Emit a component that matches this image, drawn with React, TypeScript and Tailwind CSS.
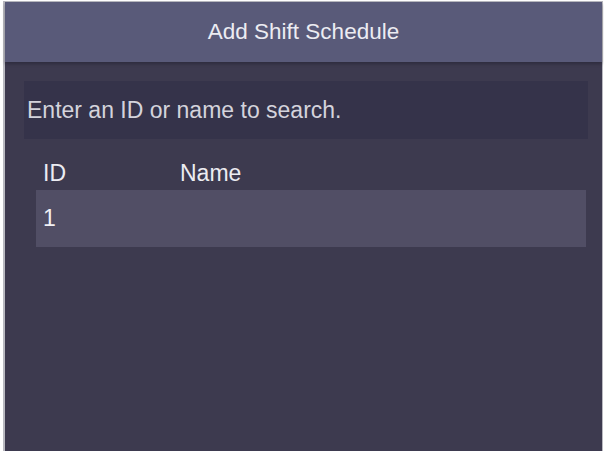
export default function App() {
  const font = { fontFamily: '"Liberation Sans", Arial, sans-serif' }

  return (
    <div className="h-[451px] w-[604px] bg-white pl-[3px] pt-[1px]" style={font}>
      <div className="flex h-[450px] w-[600px] flex-col border-l-2 border-t border-r border-[#b9b9c0] bg-[#3d3a4f]">
        {/* Title bar */}
        <header className="flex h-[60px] shrink-0 items-center justify-center bg-[#595a79] text-[22.5px] text-[#ececf2] shadow-[0_2px_3px_rgba(20,18,30,0.35)]">
          Add Shift Schedule
        </header>

        {/* Search field */}
        <div className="mt-[19px] ml-[19px] mr-[14px] flex h-[58px] items-center bg-[#35334a] pl-[3px] text-[23px] text-[#d4d3dc]">
          Enter an ID or name to search.
        </div>

        {/* Result list */}
        <div className="mt-[20px] ml-[31px] mr-[16px] flex flex-col">
          <div className="flex h-[31px] items-center pb-[3px] pl-[7px] text-[23px] text-[#ececf2]">
            <span className="w-[137px]">ID</span>
            <span>Name</span>
          </div>
          <div className="flex h-[57px] items-center bg-[#514e65] pl-[7px] text-[23px] text-[#f0f0f4]">
            <span className="w-[137px]">1</span>
            <span></span>
          </div>
        </div>
      </div>
    </div>
  )
}
